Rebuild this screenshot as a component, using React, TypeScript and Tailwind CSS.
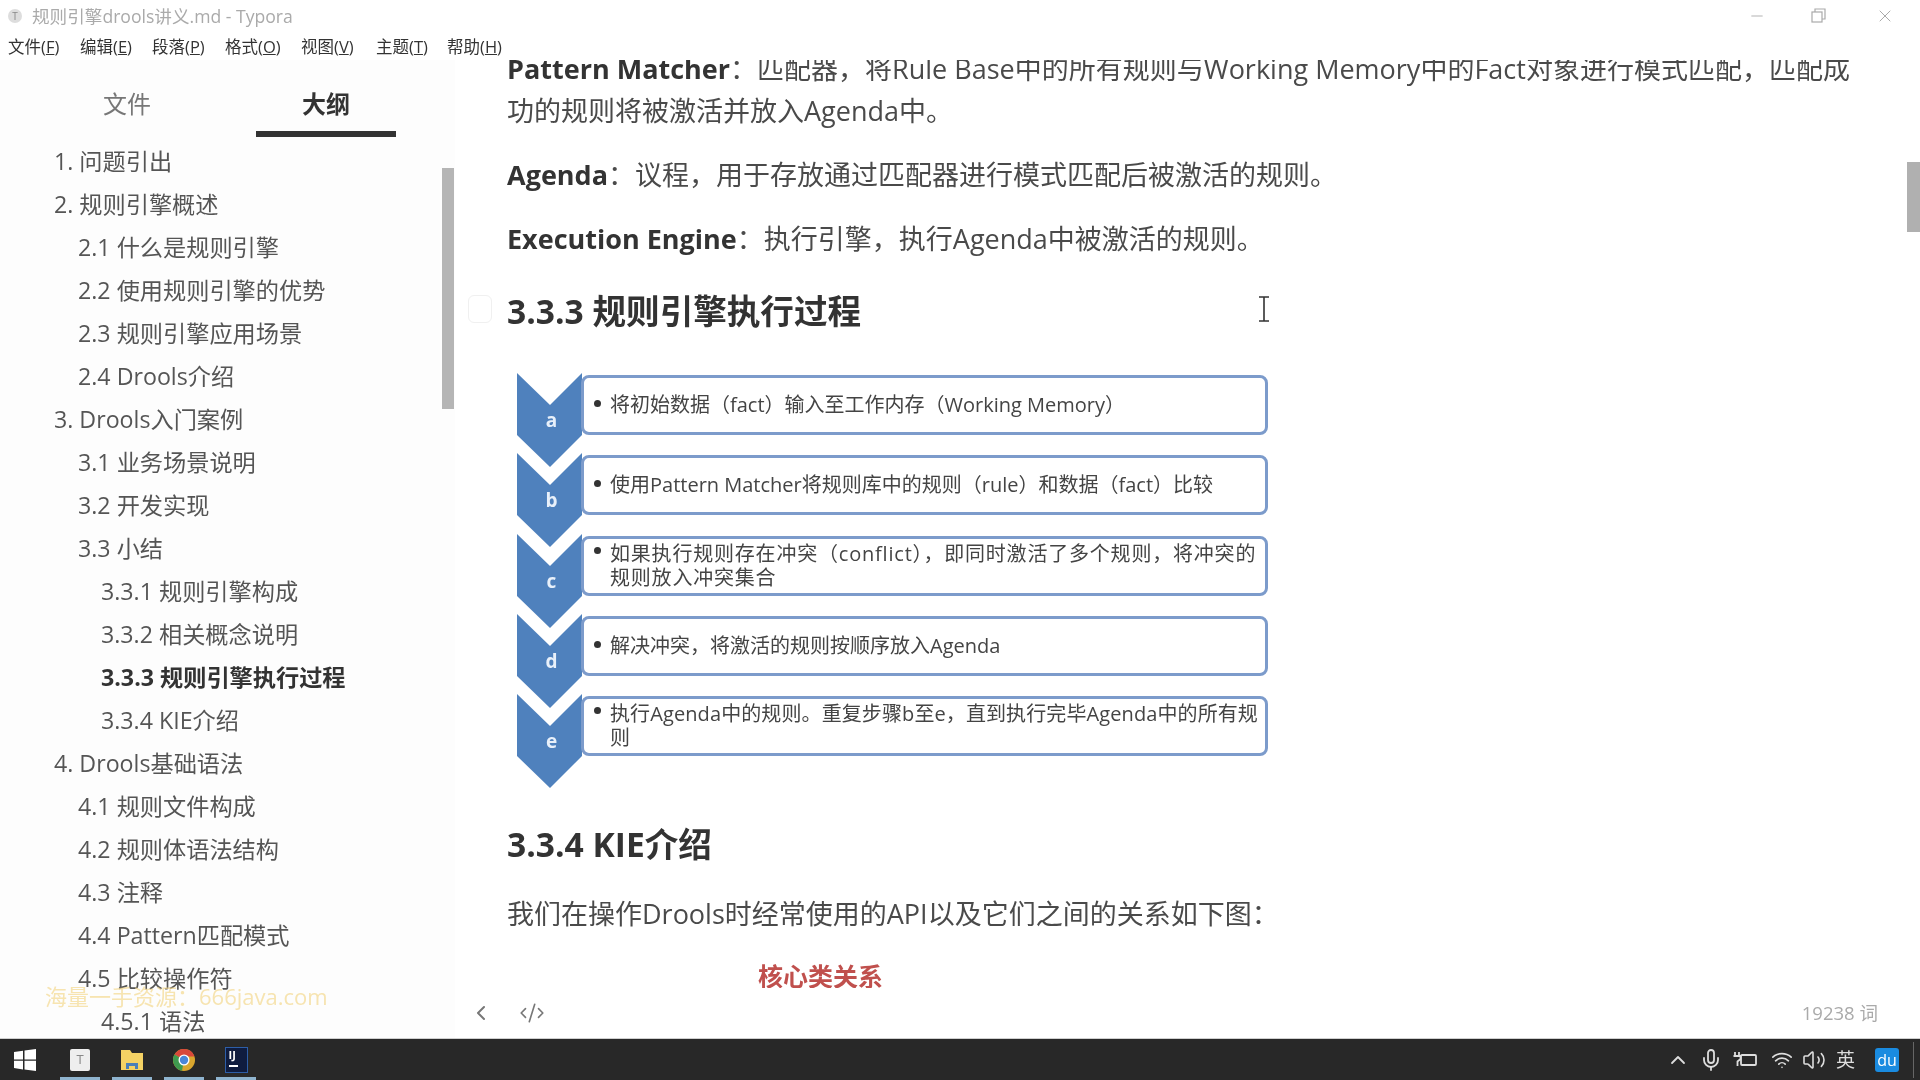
import { ChevronLeft, ChevronUp, CodeXml, Mic, Minus, Volume2, Wifi, X } from 'lucide-react';

const menus = [
    { label: '文件', key: 'F', w: 'w-[72px]' },
    { label: '编辑', key: 'E', w: 'w-[72px]' },
    { label: '段落', key: 'P', w: 'w-[73px]' },
    { label: '格式', key: 'O', w: 'w-[76px]' },
    { label: '视图', key: 'V', w: 'w-[75px]' },
    { label: '主题', key: 'T', w: 'w-[71px]' },
    { label: '帮助', key: 'H', w: 'w-[70px]' },
];

const outline = [
    { level: 1, text: '1. 问题引出' },
    { level: 1, text: '2. 规则引擎概述' },
    { level: 2, text: '2.1 什么是规则引擎' },
    { level: 2, text: '2.2 使用规则引擎的优势' },
    { level: 2, text: '2.3 规则引擎应用场景' },
    { level: 2, text: '2.4 Drools介绍' },
    { level: 1, text: '3. Drools入门案例' },
    { level: 2, text: '3.1 业务场景说明' },
    { level: 2, text: '3.2 开发实现' },
    { level: 2, text: '3.3 小结' },
    { level: 3, text: '3.3.1 规则引擎构成' },
    { level: 3, text: '3.3.2 相关概念说明' },
    { level: 3, text: '3.3.3 规则引擎执行过程', active: true },
    { level: 3, text: '3.3.4 KIE介绍' },
    { level: 1, text: '4. Drools基础语法' },
    { level: 2, text: '4.1 规则文件构成' },
    { level: 2, text: '4.2 规则体语法结构' },
    { level: 2, text: '4.3 注释' },
    { level: 2, text: '4.4 Pattern匹配模式' },
    { level: 2, text: '4.5 比较操作符' },
    { level: 3, text: '4.5.1 语法' },
];

const steps = [
    { letter: 'a', lines: ['将初始数据（fact）输入至工作内存（Working Memory）'] },
    { letter: 'b', lines: ['使用Pattern Matcher将规则库中的规则（rule）和数据（fact）比较'] },
    { letter: 'c', lines: ['如果执行规则存在冲突（conflict），即同时激活了多个规则，将冲突的', '规则放入冲突集合'], track: 'tracking-[0.8px]' },
    { letter: 'd', lines: ['解决冲突，将激活的规则按顺序放入Agenda'] },
    { letter: 'e', lines: ['执行Agenda中的规则。重复步骤b至e，直到执行完毕Agenda中的所有规', '则'], track: 'tracking-[0.1px]' },
];

function TaskApp({ children }: { children: React.ReactNode }) {
    return (
        <div className="relative w-[40px] mr-[12px] h-full flex items-center justify-center">
            {children}
            <div className="absolute bottom-0 left-0 right-0 h-[3px] bg-[#8fb4cf]" />
        </div>
    );
}

function App() {
    return (
        <div className="relative w-[1920px] h-[1080px] flex flex-col overflow-hidden bg-white font-['Open_Sans','Noto_Sans_CJK_SC',sans-serif] text-[#333] blur-[0.5px]">

            {/* title bar */}
            <div className="h-[32px] flex items-center bg-white">
                <div className="ml-[8px] w-[14px] h-[14px] rounded-full bg-[#ddd] flex items-center justify-center text-[10px] text-[#888]">T</div>
                <span className="ml-[10px] text-[17.6px] text-[#aaa]">规则引擎drools讲义.md - Typora</span>
                <div className="ml-auto flex items-center text-[#aaa]">
                    <Minus size={18} strokeWidth={1.2} />
                    <svg className="ml-[44px]" width="18" height="18" viewBox="0 0 18 18" fill="none" stroke="currentColor" strokeWidth="1.2">
                        <rect x="2" y="5" width="10" height="10" />
                        <path d="M5 5V2h10v10h-3" />
                    </svg>
                    <X className="ml-[47px] mr-[25px]" size={20} strokeWidth={1.2} />
                </div>
            </div>

            {/* menu bar */}
            <div className="h-[28px] pt-[3px] flex items-center pl-[8px] text-[16.5px] text-[#333] bg-white relative z-10">
                {menus.map(m => (
                    <span key={m.key} className={m.w}>
                        {m.label}(<span className="underline">{m.key}</span>)
                    </span>
                ))}
            </div>

            <div className="flex-1 flex overflow-hidden">

                {/* sidebar */}
                <div className="relative w-[455px] shrink-0 bg-[#fdfdfd] overflow-hidden">
                    <div className="flex h-[77px] pl-[27px]">
                        <div className="w-[200px] h-[77px] pt-[23px] text-center text-[24px] leading-[42px] text-[#777]">文件</div>
                        <div className="ml-[29px] w-[140px] h-[77px] pt-[23px] text-center text-[24px] leading-[42px] font-bold text-[#333] border-b-[6px] border-[#333]">大纲</div>
                    </div>
                    <div className="pt-[3px]">
                        {outline.map(item => (
                            <div
                                key={item.text}
                                className={`h-[43px] leading-[43px] whitespace-nowrap text-[23.2px] ${item.level === 1 ? 'pl-[54px]' : item.level === 2 ? 'pl-[78px]' : 'pl-[101px]'} ${item.active ? 'font-bold text-[#333]' : 'text-[#555]'}`}
                            >
                                {item.text}
                            </div>
                        ))}
                    </div>
                    <div className="absolute left-[442px] top-[108px] w-[12px] h-[241px] bg-[#b5b5b5]" />
                </div>

                {/* editor */}
                <div className="relative flex-1 flex flex-col overflow-hidden">
                    <div className="h-[928px] overflow-hidden pl-[52px] text-[#4a4a4a]">
                        <div className="-mt-[12px] text-[27px] leading-[42px] whitespace-nowrap">
                            <p><strong className="font-bold text-[#333]">Pattern Matcher</strong>：匹配器，将Rule Base中的所有规则与Working Memory中的Fact对象进行模式匹配，匹配成</p>
                            <p>功的规则将被激活并放入Agenda中。</p>
                            <p className="mt-[22px]"><strong className="font-bold text-[#333]">Agenda</strong>：议程，用于存放通过匹配器进行模式匹配后被激活的规则。</p>
                            <p className="mt-[22px]"><strong className="font-bold text-[#333]">Execution Engine</strong>：执行引擎，执行Agenda中被激活的规则。</p>
                        </div>

                        <h3 className="mt-[29px] h-[44px] text-[33.6px] leading-[44px] font-bold text-[#333]">3.3.3 规则引擎执行过程</h3>

                        <div className="mt-[42px] ml-[10px] w-[751px] flex flex-col gap-[20.3px]">
                            {steps.map(step => (
                                <div key={step.letter} className="relative h-[60px]">
                                    <svg className="absolute left-0 -top-[2px]" width="66" height="94" viewBox="0 0 66 94">
                                        <polygon points="0,0 33,32 65,0 65,62 33,94 0,62" fill="#4f81bd" />
                                    </svg>
                                    <span className="absolute left-[2px] w-[65px] top-[32px] text-center text-[19px] leading-[26px] font-bold text-[#e8f0fa]">{step.letter}</span>
                                    <div className="ml-[64px] h-[60px] border-[3px] border-[#7c9bcb] rounded-[8px] bg-white flex flex-col justify-center pl-[26px] text-[20px] leading-[24px] text-[#444] whitespace-nowrap relative">
                                        <span className="absolute left-[10px] top-[50%] w-[7px] h-[7px] rounded-full bg-[#333]" style={{ marginTop: step.lines.length > 1 ? -19 : -5 }} />
                                        {step.lines.map(line => <div key={line} className={step.track}>{line}</div>)}
                                    </div>
                                </div>
                            ))}
                        </div>

                        <h3 className="mt-[66px] h-[44px] text-[33.6px] leading-[44px] font-bold text-[#333]">3.3.4 KIE介绍</h3>

                        <p className="mt-[27px] text-[27px] leading-[42px] whitespace-nowrap">我们在操作Drools时经常使用的API以及它们之间的关系如下图：</p>

                        <div className="mt-[29px] ml-[251px] text-[25px] leading-[24px] font-bold text-[#c0504d]">核心类关系</div>
                    </div>

                    {/* footer */}
                    <div className="flex-1 flex items-center text-[#777]">
                        <ChevronLeft className="ml-[14px]" size={24} strokeWidth={2} />
                        <CodeXml className="ml-[26px]" size={26} strokeWidth={1.5} />
                        <span className="ml-auto mr-[42px] text-[18.5px] text-[#aaa]">19238 词</span>
                    </div>

                    {/* faint heading marker and the mouse cursor */}
                    <div className="absolute left-[13px] top-[235px] w-[24px] h-[28px] rounded-[6px] border border-[#f0f0f0]" />
                    <svg className="absolute left-[802px] top-[235px]" width="14" height="28" viewBox="0 0 14 28" fill="none" stroke="#333" strokeWidth="1.6">
                        <path d="M2 2h10M2 26h10M7 2v24" />
                    </svg>
                    <div className="absolute left-[1452px] top-[102px] w-[13px] h-[70px] bg-[#b0b0b0]" />
                </div>
            </div>

            {/* taskbar */}
            <div className="h-[42px] flex items-center bg-[#282828] border-t border-[#cfcfcf]">
                <div className="w-[60px] h-full flex items-center pl-[13px]">
                    <svg width="24" height="24" viewBox="0 0 24 24" fill="#fff">
                        <path d="M1 4l9-1.3V11.400H1zM11.500 2.500L23 1v10.400H11.500zM1 12.800h9v8.600L1 20.100zM11.500 12.800H23V23l-11.500-1.600z" />
                    </svg>
                </div>
                <TaskApp>
                    <div className="w-[20px] h-[22px] bg-[#eee] rounded-[2px] flex items-center justify-center text-[13px] text-[#888]">T</div>
                </TaskApp>
                <TaskApp>
                    <svg width="24" height="22" viewBox="0 0 24 22">
                        <path d="M1 1h9l2 3h11v17H1z" fill="#f4d264" />
                        <path d="M6 20v-6h12v6h-3v-3H9v3z" fill="#4a7fb8" />
                    </svg>
                </TaskApp>
                <TaskApp>
                    <svg width="24" height="24" viewBox="0 0 24 24">
                        <circle cx="12" cy="12" r="11" fill="#d9a62e" />
                        <path d="M12 12L2.500 6.500A11 11 0 0 1 22.500 8.500H12z" fill="#d8483b" />
                        <path d="M12 12l-9.500-5.500A11 11 0 0 0 10 22.800z" fill="#3f9a4f" />
                        <circle cx="12" cy="12" r="5.500" fill="#fff" />
                        <circle cx="12" cy="12" r="4.200" fill="#4a86d8" />
                    </svg>
                </TaskApp>
                <TaskApp>
                    <div className="w-[23px] h-[26px] bg-[#0f1c3f] border border-[#2d5ea8] flex flex-col pl-[3px] text-white">
                        <span className="text-[11px] leading-[14px] font-bold">IJ</span>
                        <span className="mt-[3px] w-[9px] h-[2px] bg-white" />
                    </div>
                </TaskApp>

                <div className="ml-auto flex items-center text-[#ddd]">
                    <ChevronUp size={24} strokeWidth={1.8} />
                    <Mic className="ml-[9px]" size={24} strokeWidth={1.8} />
                    <svg className="ml-[10px]" width="24" height="18" viewBox="0 0 24 18" fill="none" stroke="currentColor" strokeWidth="1.8">
                        <rect x="8" y="4" width="15" height="10" rx="1" />
                        <path d="M2 1v3M6 1v3M0.500 5h7v3l-3 2.500V15" />
                    </svg>
                    <Wifi className="ml-[14px]" size={22} strokeWidth={1.8} />
                    <Volume2 className="ml-[9px]" size={24} strokeWidth={1.6} />
                    <span className="ml-[10px] w-[24px] text-[19px] leading-[24px]">英</span>
                    <div className="ml-[15px] w-[24px] h-[24px] rounded-[3px] bg-[#1a8be0] text-center text-[16px] leading-[24px] text-white">du</div>
                    <div className="ml-[14px] mr-[6px] w-[1px] h-[36px] bg-[#666]" />
                </div>
            </div>

            {/* watermark */}
            <div className="absolute left-[45px] top-[980px] text-[22px] leading-[32px] text-[#f3d88e]/70 whitespace-nowrap">海量一手资源：666java.com</div>
        </div>
    );
}

export default App
